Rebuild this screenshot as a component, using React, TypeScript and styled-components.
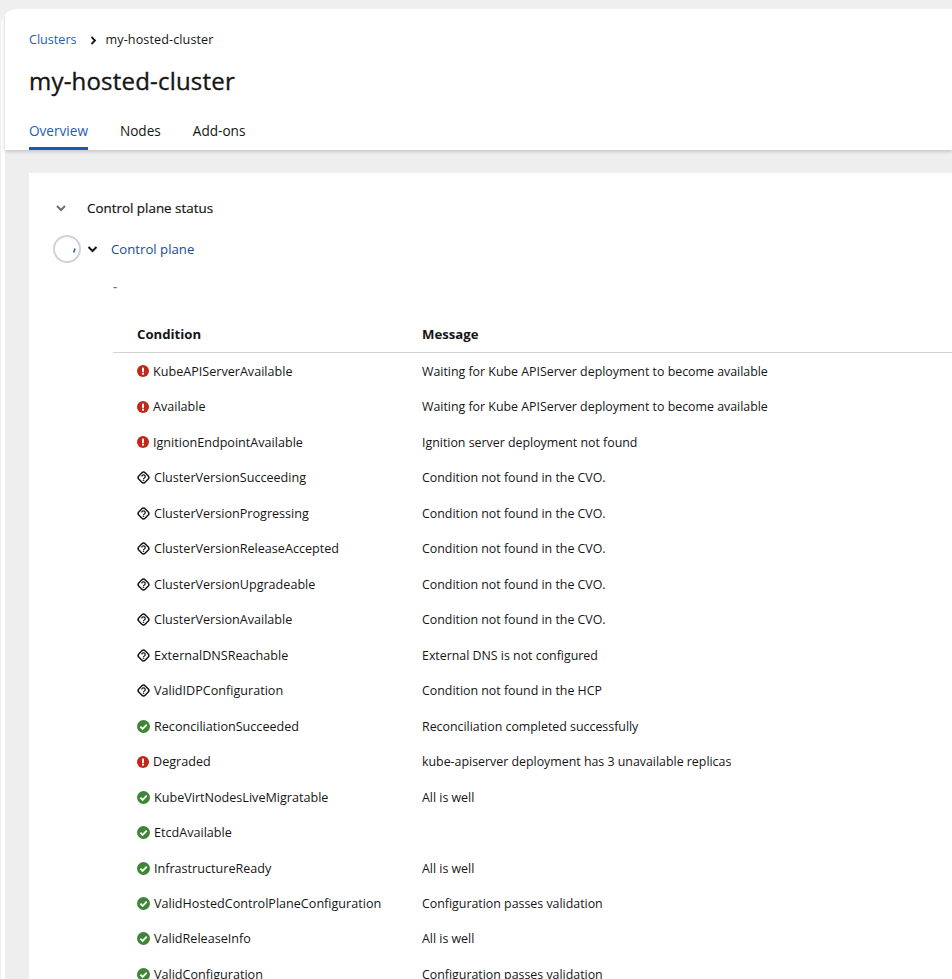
import React from "react";
import styled, { createGlobalStyle } from "styled-components";

const Global = createGlobalStyle`
  html, body { margin: 0; padding: 0; background: #efefef; overflow: hidden; }
  body { font-family: "Open Sans", "Liberation Sans", sans-serif; color: #151515; }
`;
const Page = styled.div`
  width: 952px; height: 979px; box-sizing: border-box; padding: 9px 0 0 1px; overflow: hidden;
`;
const Shell = styled.main`
  background: #fff; border-top-left-radius: 16px; overflow: hidden; height: 970px; padding-left: 4px;
`;
const Header = styled.header`
  background: #fff; height: 141px; box-sizing: border-box; padding: 22px 0 0 24px;
  box-shadow: 0 1px 4px rgba(0,0,0,.22); position: relative;
`;
const Crumbs = styled.nav`
  display: flex; align-items: center; font-size: 12.6px; line-height: 18px; height: 18px;
`;
const CrumbLink = styled.span` color: #1f5bc0; `;
const Sep = styled.svg` width: 7px; height: 9px; margin: 0 9px 0 13px; `;
const CrumbCurrent = styled.span` letter-spacing: .1px; `;
const Title = styled.h1`
  margin: 15px 0 0; font-size: 24px; line-height: 34px; font-weight: 500; letter-spacing: .2px; color: #151515;
  -webkit-text-stroke: .35px #151515;
`;
const Tabs = styled.div` display: flex; gap: 32px; margin-top: 23px; `;
const Tab = styled.div<{ $active?: boolean }>`
  font-size: 13.6px; line-height: 20px; height: 29px; box-sizing: border-box;
  color: ${p => p.$active ? "#1f5bc0" : "#151515"};
  border-bottom: 3px solid ${p => p.$active ? "#1b57b8" : "transparent"};
`;
const Body = styled.div` background: #eeeeee; height: 829px; padding: 23px 0 0 24px; `;
const Card = styled.section`
  background: #fff; padding: 25px 0 0 24px; height: 820px;
`;
const SectionHead = styled.div`
  display: flex; align-items: center; height: 20px; font-size: 13.4px; font-weight: 500;
  -webkit-text-stroke: .2px #151515;
`;
const HeadChevron = styled.svg` width: 12px; height: 8px; margin: 0 20px 0 2px; `;
const PlaneRow = styled.div` display: flex; align-items: center; height: 30px; margin-top: 16px; `;
const Spinner = styled.svg` width: 28px; height: 28px; margin-right: 6px; `;
const PlaneChevron = styled.svg` width: 11px; height: 8px; margin-right: 13px; `;
const PlaneLink = styled.span` font-size: 13.2px; color: #1d4a90; `;
const Dash = styled.div` font-size: 13px; color: #6a6e73; margin: 12px 0 0 60px; line-height: 20px; font-weight: 600; `;
const Table = styled.div` margin: 28px 0 0 60px; `;
const TableHead = styled.div`
  display: grid; grid-template-columns: 285px 1fr; height: 29px; padding-left: 24px; align-items: start;
  border-bottom: 1px solid #d2d2d2; font-size: 13.2px; font-weight: 700; line-height: 20px; color: #151515;
  box-sizing: border-box;
`;
const Row = styled.div`
  display: grid; grid-template-columns: 285px 1fr; padding: 1px 0 0 24px; height: 35.49px; align-items: center;
  font-size: 12.6px; color: #151515; box-sizing: border-box;
`;
const CondCell = styled.div` display: flex; align-items: center; gap: 4px; white-space: nowrap; `;
const MsgCell = styled.div` font-size: 12.4px; letter-spacing: -.01px; white-space: nowrap; `;
const IconBox = styled.svg` width: 12px; height: 12px; flex: none; `;
const OkBox = styled.svg` width: 13px; height: 13px; flex: none; `;
const HelpBox = styled.svg` width: 13px; height: 13px; flex: none; `;

type Kind = "err" | "ok" | "unk";
const StatusIcon = ({ kind }: { kind: Kind }) => {
  if (kind === "err") return (
    <IconBox viewBox="0 0 12 12">
      <circle cx="6" cy="6" r="6" fill="#c0281a" />
      <rect x="5" y="2.4" width="2" height="4.6" rx=".8" fill="#fff" />
      <circle cx="6" cy="8.7" r="1.1" fill="#fff" />
    </IconBox>
  );
  if (kind === "ok") return (
    <OkBox viewBox="0 0 12 12">
      <circle cx="6" cy="6" r="6" fill="#3e8635" />
      <path d="M3.1 6.1 5.2 8.2 9 4.3" fill="none" stroke="#fff" strokeWidth="1.7" />
    </OkBox>
  );
  return (
    <HelpBox viewBox="0 0 13 13">
      <rect x="2" y="2" width="9" height="9" rx="2.6" transform="rotate(45 6.5 6.5)" fill="none" stroke="#151515" strokeWidth="1.5" />
      <path d="M4.8 5.5a1.7 1.7 0 1 1 2.6 1.5c-.6.3-.9.5-.9 1" fill="none" stroke="#151515" strokeWidth="1.2" />
      <circle cx="6.5" cy="9.3" r=".8" fill="#151515" />
    </HelpBox>
  );
};

const rows: [Kind, string, string][] = [
  ["err", "KubeAPIServerAvailable", "Waiting for Kube APIServer deployment to become available"],
  ["err", "Available", "Waiting for Kube APIServer deployment to become available"],
  ["err", "IgnitionEndpointAvailable", "Ignition server deployment not found"],
  ["unk", "ClusterVersionSucceeding", "Condition not found in the CVO."],
  ["unk", "ClusterVersionProgressing", "Condition not found in the CVO."],
  ["unk", "ClusterVersionReleaseAccepted", "Condition not found in the CVO."],
  ["unk", "ClusterVersionUpgradeable", "Condition not found in the CVO."],
  ["unk", "ClusterVersionAvailable", "Condition not found in the CVO."],
  ["unk", "ExternalDNSReachable", "External DNS is not configured"],
  ["unk", "ValidIDPConfiguration", "Condition not found in the HCP"],
  ["ok", "ReconciliationSucceeded", "Reconciliation completed successfully"],
  ["err", "Degraded", "kube-apiserver deployment has 3 unavailable replicas"],
  ["ok", "KubeVirtNodesLiveMigratable", "All is well"],
  ["ok", "EtcdAvailable", ""],
  ["ok", "InfrastructureReady", "All is well"],
  ["ok", "ValidHostedControlPlaneConfiguration", "Configuration passes validation"],
  ["ok", "ValidReleaseInfo", "All is well"],
  ["ok", "ValidConfiguration", "Configuration passes validation"],
];

export default function App() {
  return (
    <Page>
      <Global />
      <Shell>
        <Header>
          <Crumbs>
            <CrumbLink>Clusters</CrumbLink>
            <Sep viewBox="0 0 7 9"><path d="M1.5 1 5 4.5 1.5 8" fill="none" stroke="#151515" strokeWidth="1.8" /></Sep>
            <CrumbCurrent>my-hosted-cluster</CrumbCurrent>
          </Crumbs>
          <Title>my-hosted-cluster</Title>
          <Tabs>
            <Tab $active>Overview</Tab>
            <Tab>Nodes</Tab>
            <Tab>Add-ons</Tab>
          </Tabs>
        </Header>
        <Body>
          <Card>
            <SectionHead>
              <HeadChevron viewBox="0 0 12 8"><path d="M2 2 6 6 10 2" fill="none" stroke="#6a6e73" strokeWidth="2" /></HeadChevron>
              Control plane status
            </SectionHead>
            <PlaneRow>
              <Spinner viewBox="0 0 28 28">
                <circle cx="14" cy="14" r="13" fill="#fff" stroke="#d2d2d2" strokeWidth="2" />
                <path d="M22 13.5 20.7 17.5" fill="none" stroke="#1f5bc0" strokeWidth="1.5" />
              </Spinner>
              <PlaneChevron viewBox="0 0 11 8"><path d="M1.5 2 5.5 6 9.5 2" fill="none" stroke="#151515" strokeWidth="2" /></PlaneChevron>
              <PlaneLink>Control plane</PlaneLink>
            </PlaneRow>
            <Dash>-</Dash>
            <Table>
              <TableHead><div>Condition</div><div>Message</div></TableHead>
              {rows.map(([k, c, m]) => (
                <Row key={c}>
                  <CondCell><StatusIcon kind={k} />{c}</CondCell>
                  <MsgCell>{m}</MsgCell>
                </Row>
              ))}
            </Table>
          </Card>
        </Body>
      </Shell>
    </Page>
  );
}
